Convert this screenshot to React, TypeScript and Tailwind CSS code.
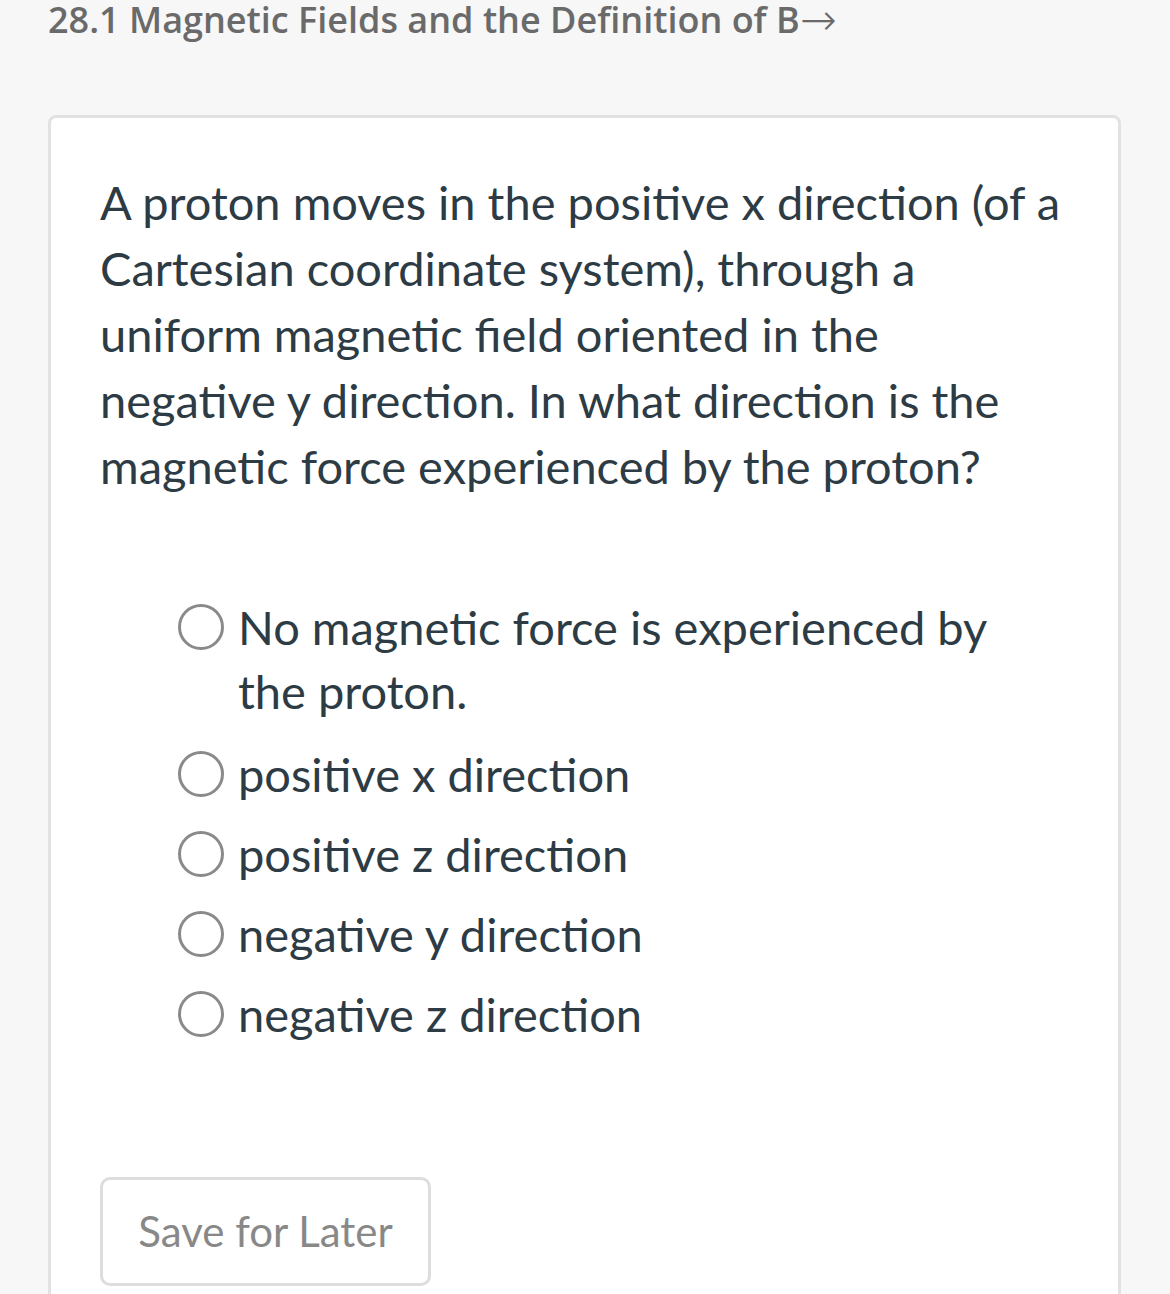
import React from "react";

const options = [
  "No magnetic force is experienced by the proton.",
  "positive x direction",
  "positive z direction",
  "negative y direction",
  "negative z direction",
];

export default function App() {
  return (
    <div className="min-h-[1294px] w-[1170px] overflow-hidden bg-[#f7f7f7]" style={{ fontFamily: "Lato, 'Liberation Sans', sans-serif" }}>
      <div className="h-[1294px] px-[48px]">
        <h1
          className="flex items-center text-[36px] font-semibold leading-[40px] text-[#6a6a6a]"
          style={{ fontFamily: "'Open Sans', 'Liberation Sans', sans-serif" }}
        >
          <span>28.1 Magnetic Fields and the Definition of B</span>
          <span className="text-[44px] font-light leading-[40px]" style={{ fontFamily: "'DejaVu Sans', sans-serif" }}>→</span>
        </h1>
        <div className="mt-[75px] h-[1300px] w-[1073px] rounded-[8px] border-[3px] border-[#e2e2e2] bg-white px-[49px] pt-[51px]">
          <p className="w-[964px] text-[47px] leading-[66px] text-[#2d3b45]">
            A proton moves in the positive x direction (of a Cartesian coordinate system), through a uniform magnetic field oriented in the negative y direction. In what direction is the magnetic force experienced by the proton?
          </p>
          <div className="mt-[96px] flex flex-col gap-[16px] pl-[78px]">
            {options.map((o, i) => (
              <div key={o} className={i === 0 ? "mb-[3px] flex items-start" : "flex items-start"}>
                <span className="mt-[9px] mr-[14px] block h-[46px] w-[46px] shrink-0 rounded-full border-[3px] border-[#8a8a8a] bg-white" />
                <span className="w-[790px] text-[47px] leading-[64px] text-[#2d3b45]">{o}</span>
              </div>
            ))}
          </div>
          <button className="mt-[131px] flex h-[109px] w-[331px] items-center justify-center rounded-[10px] border-[3px] border-[#dddddd] bg-white text-[42px] text-[#888888]">
            Save for Later
          </button>
        </div>
      </div>
    </div>
  );
}
